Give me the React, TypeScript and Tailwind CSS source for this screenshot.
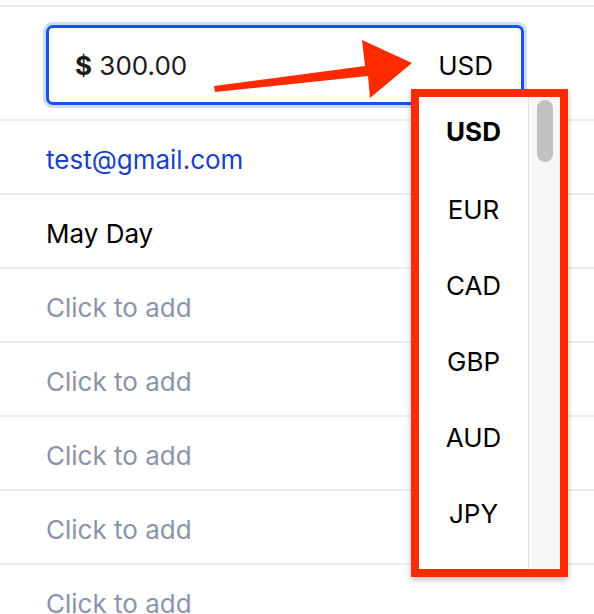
import React from "react";

const currencies = ["USD", "EUR", "CAD", "GBP", "AUD", "JPY"];

function Row({ children }: { children: React.ReactNode }) {
  return (
    <div className="h-[74px] border-b-2 border-[#eceef4] flex items-center pl-[46px] pt-[5px]">
      {children}
    </div>
  );
}

function CurrencyList() {
  return (
    <div className="absolute left-[411px] top-[89px] w-[157px] h-[488px] border-[8px] border-[#ff2a00] bg-white shadow-[0_3px_6px_rgba(0,0,0,0.25)] flex">
      <div className="flex-1 flex flex-col">
        {currencies.map((c, i) => (
          <div
            key={c}
            className={
              i === 0
                ? "h-[68px] mb-[6px] flex items-center justify-center text-[26px] text-black font-bold"
                : "h-[76px] flex items-center justify-center text-[26px] text-black"
            }
            style={{ fontFamily: "Inter, sans-serif" }}
          >
            {c}
          </div>
        ))}
      </div>
      <div className="w-[32px] bg-[#f7f7f7] border-l border-[#e2e2e2] pt-[3px] flex justify-center">
        <div className="w-[16px] h-[62px] rounded-full bg-[#c1c1c1]" />
      </div>
    </div>
  );
}

function Arrow() {
  return (
    <svg
      className="absolute left-0 top-0 pointer-events-none"
      width="594"
      height="614"
      viewBox="0 0 594 614"
    >
      <polygon
        points="214,86 365,66 362,40 412,63 370,98 368,76 215,92"
        fill="#ff2a00"
      />
    </svg>
  );
}

export default function App() {
  return (
    <div
      className="relative w-[594px] h-[614px] bg-white overflow-hidden"
      style={{ fontFamily: "Inter, 'Open Sans', sans-serif" }}
    >
      <div className="h-[7px] border-b-2 border-[#eceef4]" />
      <div className="h-[114px] border-b-2 border-[#eceef4] pt-[15px] pl-[43px]">
        <div className="w-[484px] h-[86px] rounded-[9px] bg-[#cddcfb] p-[3px]">
          <div className="h-full rounded-[7px] border-[3px] border-[#1652f0] bg-white flex items-center justify-between pl-[26px] pr-[28px] text-[26px] text-[#1c1c1c]">
            <span>
              <span className="font-bold">$</span> 300.00
            </span>
            <span className="text-black">USD</span>
          </div>
        </div>
      </div>
      <Row>
        <span className="text-[26px] text-[#1a3fc8]">test@gmail.com</span>
      </Row>
      <Row>
        <span className="text-[26px] text-black">May Day</span>
      </Row>
      {[0, 1, 2, 3, 4].map((i) => (
        <Row key={i}>
          <span className="text-[26px] text-[#8b93a8]">Click to add</span>
        </Row>
      ))}
      <Arrow />
      <CurrencyList />
    </div>
  );
}
